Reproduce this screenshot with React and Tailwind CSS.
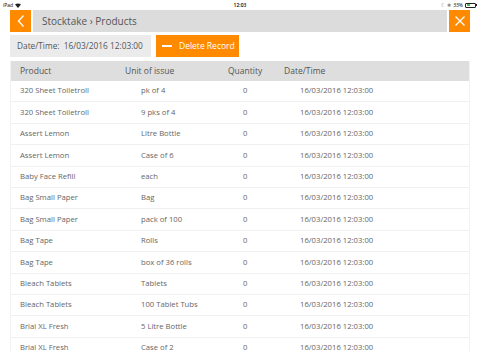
import React from "react";

const rows = [
  ["320 Sheet Toiletroll", "pk of 4"],
  ["320 Sheet Toiletroll", "9 pks of 4"],
  ["Assert Lemon", "Litre Bottle"],
  ["Assert Lemon", "Case of 6"],
  ["Baby Face Refill", "each"],
  ["Bag Small Paper", "Bag"],
  ["Bag Small Paper", "pack of 100"],
  ["Bag Tape", "Rolls"],
  ["Bag Tape", "box of 36 rolls"],
  ["Bleach Tablets", "Tablets"],
  ["Bleach Tablets", "100 Tablet Tubs"],
  ["Brial XL Fresh", "5 Litre Bottle"],
  ["Brial XL Fresh", "Case of 2"],
];

export default function App() {
  return (
    <div
      className="w-[480px] h-[360px] overflow-hidden bg-white relative"
      style={{ fontFamily: '"Open Sans", "Noto Sans", sans-serif' }}
    >
      {/* status bar */}
      <div className="h-[10px] flex items-center justify-between px-[3px] text-[5px] text-black leading-none">
        <div className="flex items-center gap-[2px] w-[60px]">
          <span>iPad</span>
          <svg width="6" height="5" viewBox="0 0 6 5"><path d="M0 1.5 Q3 -0.5 6 1.5 L3 5 Z" fill="#222" /></svg>
        </div>
        <span className="font-semibold">12:03</span>
        <div className="flex items-center justify-end gap-[2px] w-[60px]">
          <span className="text-[#888]">☾</span>
          <span className="text-[#888]">✱</span>
          <span>33%</span>
          <span className="w-[11px] h-[5px] border border-[#222] rounded-[1px] p-[0.5px] flex">
            <span className="w-[3px] h-full bg-[#3cc63c]" />
          </span>
          <span className="w-[1px] h-[2px] bg-[#222] -ml-[2px]" />
        </div>
      </div>

      {/* header */}
      <div className="flex h-[22px] px-[10px] gap-[2px]">
        <div className="w-[21px] h-full bg-[#ff8a00] flex items-center justify-center">
          <svg width="10" height="14" viewBox="0 0 10 14"><path d="M7.5 1.5 L2.5 7 L7.5 12.5" stroke="white" strokeWidth="1.3" fill="none" /></svg>
        </div>
        <div className="flex-1 h-full bg-[#dcdcdc] flex items-center pl-[9px] text-[10px] text-[#555]">
          Stocktake › Products
        </div>
        <div className="w-[21px] h-full bg-[#ff8a00] flex items-center justify-center">
          <svg width="12" height="12" viewBox="0 0 12 12"><path d="M1.5 1.5 L10.5 10.5 M10.5 1.5 L1.5 10.5" stroke="white" strokeWidth="1.3" /></svg>
        </div>
      </div>

      {/* date row */}
      <div className="flex px-[10px] mt-[3px] gap-[5px] h-[22px]">
        <div className="w-[141px] h-full bg-[#ebebeb] flex items-center pl-[7px] text-[8.3px] text-[#555]">
          Date/Time:&nbsp;&nbsp;16/03/2016 12:03:00
        </div>
        <div className="w-[83px] h-full bg-[#ff8a00] flex items-center pl-[6px] text-[8.5px] text-white gap-[7px]">
          <span className="w-[10px] h-[1.5px] bg-white" />
          <span>Delete Record</span>
        </div>
      </div>

      {/* table */}
      <div className="mx-[10px] mt-[4px] h-[290px] overflow-hidden border-x border-[#f2f2f2]">
        <div className="grid grid-cols-[114px_103px_56px_1fr] h-[20px] items-center bg-[#dedede] text-[8.5px] text-[#555]">
          <div className="pl-[9px]">Product</div>
          <div>Unit of issue</div>
          <div>Quantity</div>
          <div>Date/Time</div>
        </div>
        {rows.map(([p, u], i) => (
          <div
            key={i}
            className="grid grid-cols-[114px_103px_56px_1fr] h-[21.4px] items-center border-b border-[#f0f0f0] text-[7.7px] text-[#666]"
          >
            <div className="pl-[9px]">{p}</div>
            <div className="pl-[16px]">{u}</div>
            <div className="pl-[15px]">0</div>
            <div className="pl-[16px]">16/03/2016 12:03:00</div>
          </div>
        ))}
      </div>
    </div>
  );
}
